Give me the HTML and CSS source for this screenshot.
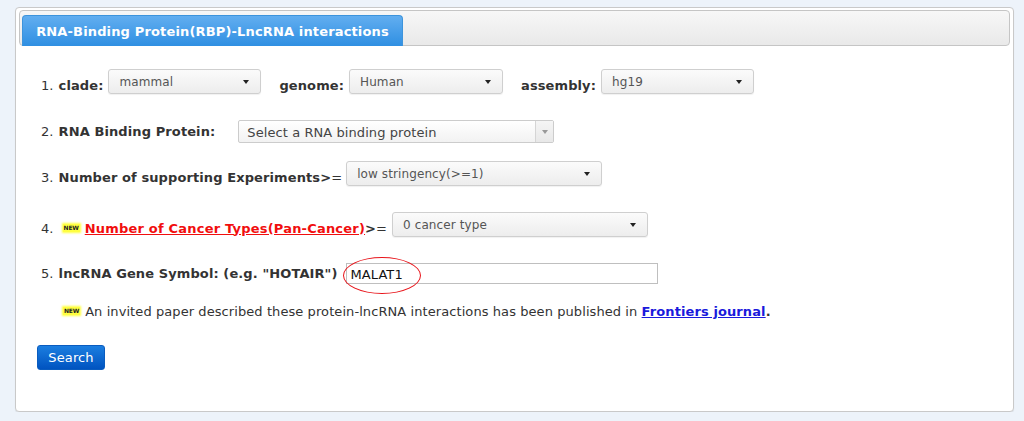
FILE: index.html
```html
<!DOCTYPE html>
<html>
<head>
<meta charset="utf-8">
<link rel="stylesheet" href="styles.css">
</head>
<body>
<div class="panel">
  <div class="tabbar">
    <div class="tab">RNA-Binding Protein(RBP)-LncRNA interactions</div>
  </div>
  <div class="content">
    <div class="row r1 low">
      <span class="lbl"><span class="num">1.</span><b>clade:</b></span>
      <div class="sel w153 ml5"><span>mammal</span><i class="caret"></i></div>
      <span class="lbl ml18"><b>genome:</b></span>
      <div class="sel w154 ml5"><span>Human</span><i class="caret"></i></div>
      <span class="lbl ml18"><b>assembly:</b></span>
      <div class="sel w153 ml5"><span>hg19</span><i class="caret"></i></div>
    </div>
    <div class="row r2">
      <span class="lbl"><span class="num">2.</span><b>RNA Binding Protein:</b></span>
      <div class="chosen"><span>Select a RNA binding protein</span><div class="chosen-arrow"><i></i></div></div>
    </div>
    <div class="row r3 low">
      <span class="lbl"><span class="num">3.</span><b>Number of supporting Experiments&gt;</b>=</span>
      <div class="sel w256 ml4"><span>low stringency(&gt;=1)</span><i class="caret"></i></div>
    </div>
    <div class="row r4 low">
      <span class="lbl"><span class="num">4.</span><span class="new">NEW</span><a class="red" href="#">Number of Cancer Types(Pan-Cancer)</a><b>&gt;</b>=</span>
      <div class="sel w256 ml5"><span>0 cancer type</span><i class="caret"></i></div>
    </div>
    <div class="row r5">
      <span class="lbl"><span class="num">5.</span><b>lncRNA Gene Symbol: (e.g. "HOTAIR")</b></span>
      <div class="inputwrap">
        <div class="input">MALAT1</div>
        <div class="ellipse"></div>
      </div>
    </div>
    <div class="row r6">
      <span class="new">NEW</span>An invited paper described these protein-lncRNA interactions has been published in&nbsp;<a class="blue" href="#">Frontiers journal</a><b>.</b>
    </div>
    <div class="row r7">
      <button class="search">Search</button>
    </div>
  </div>
</div>
</body>
</html>
```
FILE: styles.css
```css
html, body {
  margin: 0;
  padding: 0;
}
body {
  background: #edf3fa;
  font-family: "DejaVu Sans", Verdana, sans-serif;
  font-size: 13px;
  color: #333;
  padding: 7px 0 0 15px;
  letter-spacing: 0.08px;
}
.panel {
  width: 991px;
  height: 399px;
  background: #fff;
  border: 1px solid #c9c9c9;
  border-radius: 4px;
  box-shadow: 0 1px 1px rgba(0,0,0,0.08);
  padding: 2px 3px;
}
.tabbar {
  height: 34px;
  border: 1px solid #c5c5c5;
  border-radius: 4px;
  background: linear-gradient(#f7f7f7, #e9e9e9);
  display: flex;
  align-items: flex-end;
  padding-left: 2px;
}
.tab {
  width: 381px;
  height: 31px;
  margin-bottom: -1px;
  border: 1px solid #3d94dc;
  border-bottom: none;
  border-radius: 4px 4px 0 0;
  background: linear-gradient(#62aef0, #2f8fe2);
  color: #fff;
  font-weight: bold;
  font-size: 13px;
  letter-spacing: 0.15px;
  display: flex;
  align-items: center;
  justify-content: center;
  box-sizing: border-box;
  padding-top: 1px;
}
.content {
  padding-left: 22px;
}
.row {
  display: flex;
  align-items: center;
  white-space: nowrap;
}
.lbl {
  display: flex;
  align-items: center;
}
.low .lbl { padding-top: 7px; }
.num { margin-right: 5px; }
b { font-weight: bold; letter-spacing: 0.1px; }
.ml4 { margin-left: 4px; }
.ml5 { margin-left: 5px; }
.ml18 { margin-left: 18px; }
.w153 { width: 153px; }
.w154 { width: 154px; }
.w256 { width: 256px; }
.r1 { margin-top: 23px; height: 25px; }
.r2 { margin-top: 26px; height: 23px; }
.r3 { margin-top: 18px; height: 25px; }
.r4 { margin-top: 26px; height: 25px; }
.r5 { margin-top: 26px; height: 21px; }
.r6 { margin-top: 19px; height: 16px; padding-left: 22px; }
.r7 { margin-top: 26px; height: 25px; margin-left: -4px; }
.sel {
  height: 25px;
  box-sizing: border-box;
  border: 1px solid #cfcfcf;
  border-radius: 3px;
  background: linear-gradient(#fbfbfb, #ededed);
  display: flex;
  align-items: center;
  justify-content: space-between;
  padding: 0 11px 0 10px;
  color: #555;
  font-size: 12px;
  letter-spacing: 0.1px;
  box-shadow: 0 1px 1px rgba(0,0,0,0.06);
}
.caret {
  width: 0;
  height: 0;
  border-left: 3.5px solid transparent;
  border-right: 3.5px solid transparent;
  border-top: 4px solid #222;
}
.chosen {
  margin-left: 23px;
  width: 316px;
  height: 23px;
  box-sizing: border-box;
  border: 1px solid #cccccc;
  border-radius: 2px;
  background: linear-gradient(#ffffff, #f2f2f2);
  display: flex;
  align-items: center;
  justify-content: space-between;
  padding-left: 8px;
  color: #444;
  font-size: 13px;
}
.chosen span { padding-top: 2px; }
.chosen-arrow {
  width: 17px;
  height: 100%;
  border-left: 1px solid #d5d5d5;
  display: flex;
  align-items: center;
  justify-content: center;
  background: linear-gradient(#f5f5f5, #e8e8e8);
}
.chosen-arrow i {
  width: 0;
  height: 0;
  border-left: 3px solid transparent;
  border-right: 3px solid transparent;
  border-top: 4px solid #999;
}
.new {
  display: inline-block;
  font-size: 6px;
  font-weight: bold;
  color: #222;
  background: #ffff40;
  box-shadow: 0 0 2px 1px #ffff40;
  padding: 0 1px;
  line-height: 8px;
  margin: 0 5px 0 0;
  letter-spacing: -0.2px;
}
.r4 .num { margin-right: 9px; }
a.red {
  color: #f10e0e;
  font-weight: bold;
  letter-spacing: 0.2px;
  text-decoration: underline;
}
a.blue {
  color: #1a1adc;
  font-weight: bold;
  letter-spacing: 0.1px;
  text-decoration: underline;
}
.inputwrap {
  position: relative;
  margin-left: 8px;
}
.input {
  width: 312px;
  height: 21px;
  box-sizing: border-box;
  border: 1px solid #bfbfbf;
  padding: 2px 3px 0 4px;
  display: flex;
  align-items: center;
  color: #111;
  font-size: 13px;
}
.ellipse {
  position: absolute;
  left: -3px;
  top: -6px;
  width: 76px;
  height: 35px;
  border: 1.5px solid #e8141a;
  border-radius: 50%;
}
.search {
  width: 68px;
  height: 25px;
  border: 1px solid #0a5cbf;
  border-radius: 3px;
  background: linear-gradient(#1b7ee0, #0053c0);
  color: #fff;
  font-family: "DejaVu Sans", Verdana, sans-serif;
  font-size: 13px;
  letter-spacing: 0.1px;
  padding: 0;
}
```
